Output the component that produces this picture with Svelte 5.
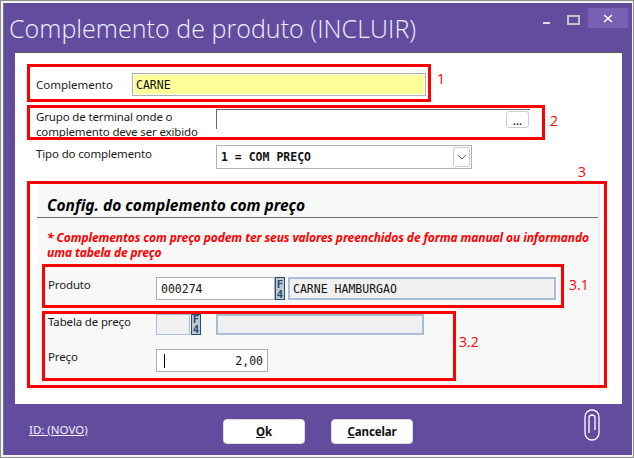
<script>
	// red annotations drawn on top of the form
	const marks = [
		{ x: 27, y: 64, w: 404, h: 38 },
		{ x: 27, y: 105, w: 518, h: 35 },
		{ x: 27, y: 181, w: 580, h: 207 },
		{ x: 42, y: 264, w: 522, h: 44 },
		{ x: 42, y: 311, w: 414, h: 70 }
	];
	const notes = [
		{ t: '1', x: 437, y: 70 },
		{ t: '2', x: 550, y: 112 },
		{ t: '3', x: 578, y: 163 },
		{ t: '3.1', x: 569, y: 276 },
		{ t: '3.2', x: 459, y: 333 }
	];
</script>

<div class="window">
	<div class="frame">
		<header class="titlebar">
			<h1>Complemento de produto (INCLUIR)</h1>
			<div class="controls">
				<span class="min"></span>
				<span class="max"></span>
				<span class="close">
					<svg width="10" height="9" viewBox="0 0 10 9"><path d="M1 1l8 7M9 1L1 8" stroke="#fff" stroke-width="1.6" fill="none" /></svg>
				</span>
			</div>
		</header>

		<main class="panel">
			<div class="row first">
				<span class="label comp">Complemento</span>
				<div class="input yellow"><span class="mono">CARNE</span></div>
			</div>

			<div class="row grupo">
				<span class="label wide">Grupo de terminal onde o<br />complemento deve ser exibido</span>
				<div class="lookup"><button class="dots">...</button></div>
			</div>

			<div class="row tipo">
				<span class="label wide">Tipo do complemento</span>
				<div class="select">
					<span class="mono bold">1 = COM PREÇO</span>
					<span class="arrow">
						<svg width="10" height="6" viewBox="0 0 10 6"><path d="M1 1l4 4 4-4" stroke="#555" fill="none" /></svg>
					</span>
				</div>
			</div>

			<section class="config">
				<h2>Config. do complemento com preço</h2>
				<p class="warn">* Complementos com preço podem ter seus valores preenchidos de forma manual ou informando uma tabela de preço</p>

				<div class="row produto">
					<span class="label short">Produto</span>
					<div class="input code"><span class="mono">000274</span></div>
					<span class="f4">F<br />4</span>
					<div class="input desc"><span class="mono">CARNE HAMBURGAO</span></div>
				</div>

				<div class="row tabela">
					<span class="label short">Tabela de preço</span>
					<div class="input off"></div>
					<span class="f4 small">F<br />4</span>
					<div class="input desc2"></div>
				</div>

				<div class="row preco">
					<span class="label short">Preço</span>
					<div class="input price"><i class="caret"></i><span class="mono">2,00</span></div>
				</div>
			</section>
		</main>

		<footer class="footer">
			<a class="id" href="#novo">ID: (NOVO)</a>
			<div class="buttons">
				<button class="btn"><u>O</u>k</button>
				<button class="btn"><u>C</u>ancelar</button>
			</div>
			<svg class="clip" width="16" height="32" viewBox="0 0 16 32">
				<path d="M1 8a7 7 0 0 1 14 0v16a7 7 0 0 1-14 0zM11 21V9a3 3 0 0 0-6 0v15" stroke="#fff" stroke-width="1.3" fill="none" />
			</svg>
		</footer>
	</div>

	{#each marks as m}
		<div class="mark" style="left: {m.x}px; top: {m.y}px; width: {m.w}px; height: {m.h}px"></div>
	{/each}
	{#each notes as n}
		<span class="note" style="left: {n.x}px; top: {n.y}px">{n.t}</span>
	{/each}
</div>

<style>
	:global(body) {
		margin: 0;
		background: #f0f0f0;
	}

	.window {
		position: relative;
		width: 634px;
		height: 458px;
		box-sizing: border-box;
		padding: 3px 2px 3px 3px;
		background: #f4f4f4;
		box-shadow: inset 0 0 0 1px #8f8f8f;
		font-family: "Noto Sans", "Open Sans", sans-serif;
		font-size: 11.5px;
		color: #111;
		overflow: hidden;
	}

	.frame {
		height: 100%;
		display: flex;
		flex-direction: column;
		background: #634c9e;
		border-left: 1px solid #777;
	}

	.titlebar {
		height: 49px;
		flex: none;
		display: flex;
		justify-content: space-between;
		align-items: flex-start;
		padding-left: 5px;
	}

	h1 {
		margin: 8px 0 0;
		font-family: "Open Sans", sans-serif;
		font-weight: 300;
		font-size: 25px;
		letter-spacing: 0.05px;
		line-height: 34px;
		color: #eef0ff;
		white-space: nowrap;
	}

	.controls {
		display: flex;
		align-items: flex-start;
		margin: 5px 4px 0 0;
	}

	.min {
		width: 7px;
		height: 2px;
		margin: 14px 17px 0 0;
		background: #ddd;
	}

	.max {
		width: 9px;
		height: 6px;
		margin: 7px 8px 0 0;
		border: 2px solid #c4c4c4;
	}

	.close {
		width: 40px;
		height: 20px;
		display: flex;
		align-items: center;
		justify-content: center;
		background: #7a60b2;
	}

	.panel {
		height: 352px;
		flex: none;
		box-sizing: border-box;
		margin: 0 10px 0 11px;
		padding-top: 20px;
		background: #fff;
		border-top: 1px solid #5c5c5c;
	}

	.row {
		display: flex;
		align-items: flex-start;
	}

	.first {
		height: 23px;
		padding-left: 21px;
		align-items: center;
	}

	.label {
		flex: none;
		line-height: 15px;
		letter-spacing: -0.15px;
		color: #1a1a1a;
	}

	.comp {
		width: 96px;
		letter-spacing: 0;
	}

	.wide {
		width: 180px;
	}

	.short {
		width: 108px;
	}

	.mono {
		font-family: "DejaVu Sans Mono", "Liberation Mono", monospace;
		font-size: 11.5px;
		color: #111;
	}

	.bold {
		font-weight: 700;
	}

	.input {
		box-sizing: border-box;
		height: 23px;
		display: flex;
		align-items: center;
		border: 1px solid #b0b0b0;
		background: #fff;
	}

	.yellow {
		width: 294px;
		padding-left: 3px;
		box-shadow: inset 0 0 0 1px #fff;
		background: #ffff99;
	}

	.grupo {
		margin-top: 13px;
		height: 36px;
		padding-left: 21px;
	}

	.lookup {
		box-sizing: border-box;
		width: 314px;
		height: 20px;
		display: flex;
		justify-content: flex-end;
		padding: 1px 1px 0 0;
		border-top: 1px solid #666;
		border-left: 1px solid #666;
	}

	.dots {
		box-sizing: border-box;
		width: 23px;
		height: 17px;
		padding: 3px 0 0;
		border: 1px solid #ccc;
		border-radius: 3px;
		background: #fff;
		font-family: "Noto Sans", sans-serif;
		font-size: 12px;
		line-height: 12px;
		color: #000;
	}

	.tipo {
		height: 24px;
		padding-left: 21px;
	}

	.tipo .label {
		padding-top: 1px;
	}

	.select {
		box-sizing: border-box;
		width: 256px;
		height: 24px;
		display: flex;
		align-items: center;
		justify-content: space-between;
		padding: 0 1px 0 4px;
		border: 1px solid #b0b0b0;
	}

	.arrow {
		box-sizing: border-box;
		width: 17px;
		height: 20px;
		display: flex;
		align-items: center;
		justify-content: center;
		border: 1px solid #ccc;
		border-radius: 2px;
	}

	.config {
		box-sizing: border-box;
		height: 201px;
		margin: 15px 22px 0 22px;
		background: #f8f8f8;
		border-right: 2px solid #eee;
	}

	h2 {
		margin: 0;
		box-sizing: border-box;
		height: 34px;
		padding: 11px 0 0 10px;
		border-bottom: 1px solid #6e6e6e;
		font-size: 15.5px;
		font-style: italic;
		font-weight: 700;
		line-height: 20px;
		color: #000;
	}

	.warn {
		margin: 12px 0 0 10px;
		font-size: 12px;
		font-style: italic;
		font-weight: 700;
		letter-spacing: -0.1px;
		line-height: 15px;
		color: #f00;
	}

	.produto {
		margin-top: 17px;
		padding-left: 11px;
	}

	.code {
		width: 119px;
		padding-left: 4px;
	}

	.f4 {
		flex: none;
		box-sizing: border-box;
		width: 10px;
		height: 23px;
		padding-top: 1px;
		border: 1px solid #1f4e79;
		background: #c3c9d0;
		font-family: "DejaVu Sans Mono", monospace;
		font-size: 10.5px;
		font-weight: 700;
		line-height: 10px;
		text-align: center;
		color: #1f4e79;
		overflow: hidden;
	}

	.desc {
		width: 268px;
		margin-left: 3px;
		padding-left: 3px;
		border: 2px solid #a9bdd6;
		background: #f0f0f0;
	}

	.tabela {
		margin-top: 14px;
		padding-left: 11px;
	}

	.off {
		width: 34px;
		height: 21px;
		margin-right: 1px;
		border: 1px solid #a9bdd6;
		background: #f0f0f0;
	}

	.small {
		height: 21px;
		padding-top: 0;
		line-height: 9.5px;
	}

	.desc2 {
		width: 208px;
		height: 21px;
		margin-left: 15px;
		border: 2px solid #a9bdd6;
		background: #f0f0f0;
	}

	.preco {
		margin-top: 14px;
		padding-left: 11px;
	}

	.price {
		width: 112px;
		justify-content: space-between;
		padding: 0 4px 0 7px;
	}

	.caret {
		width: 1px;
		height: 14px;
		background: #000;
	}

	.footer {
		flex: 1;
		position: relative;
		display: flex;
		align-items: flex-start;
	}

	.id {
		margin: 17px 0 0 25px;
		color: #f0f0ff;
		line-height: 17px;
	}

	.buttons {
		position: absolute;
		left: 219px;
		top: 15px;
		display: flex;
		gap: 26px;
	}

	.btn {
		box-sizing: border-box;
		width: 82px;
		height: 25px;
		padding: 0 0 1px;
		border: 1px solid #ddd;
		border-radius: 4px;
		background: #fff;
		font-family: "Noto Sans", sans-serif;
		font-size: 11.5px;
		font-weight: 700;
		letter-spacing: -0.15px;
		color: #111;
	}

	.clip {
		position: absolute;
		left: 580px;
		top: 5px;
	}

	.mark {
		position: absolute;
		box-sizing: border-box;
		border: 3px solid #f00;
	}

	.note {
		position: absolute;
		font-family: "Open Sans", sans-serif;
		font-size: 14px;
		line-height: 18px;
		color: #f00;
	}
</style>
